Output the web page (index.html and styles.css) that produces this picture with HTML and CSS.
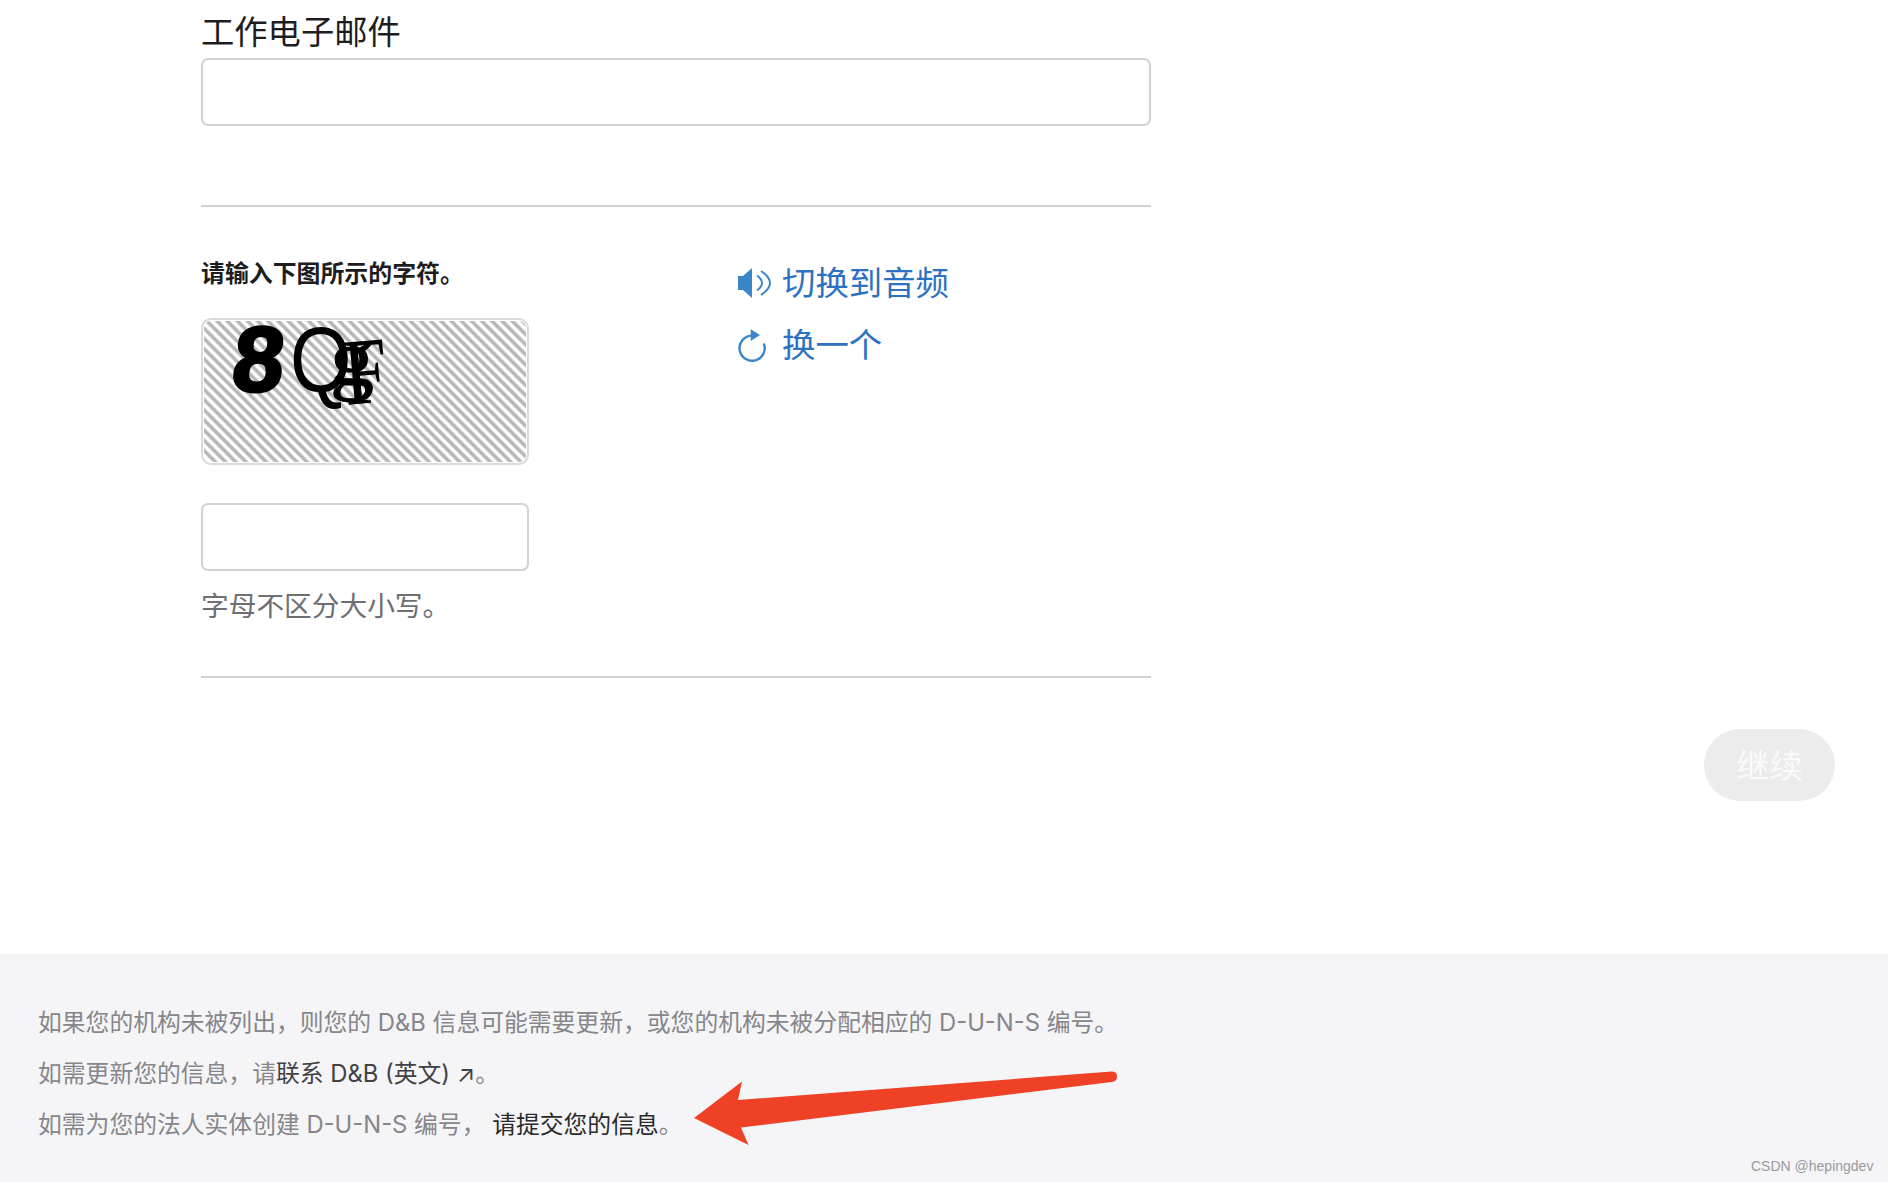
FILE: index.html
```html
<!DOCTYPE html>
<html lang="zh-CN">
<head>
<meta charset="utf-8">
<title>工作电子邮件</title>
<link rel="stylesheet" href="styles.css">
</head>
<body>
<div class="page">
  <main class="main">
    <form class="form">
      <label class="field-label" for="email">工作电子邮件</label>
      <input class="text-input email-input" id="email" type="text">
      <div class="divider first-divider"></div>
      <section class="captcha-section">
        <div class="captcha-col">
          <div class="captcha-title">请输入下图所示的字符。</div>
          <div class="captcha-image">
            <svg class="captcha-svg" viewBox="0 0 320 141" width="320" height="141">
              <text class="cap-8" transform="translate(26 70) skewX(-6)">8</text>
              <text class="cap-q" transform="translate(86 70) scale(0.86 1)">Q</text>
              <text class="cap-g" transform="translate(126 64) scale(1.1 1)">g</text>
              <text class="cap-f" transform="translate(142 84) rotate(-5) scale(0.84 1)">F</text>
            </svg>
          </div>
          <input class="text-input captcha-input" type="text">
          <p class="hint">字母不区分大小写。</p>
        </div>
        <div class="link-col">
          <a class="action-link" href="#">
            <svg class="icon" viewBox="0 0 32 30" width="32" height="30">
              <path class="icon-fill" d="M0 8H5L14 0V30L5 22H0Z"/>
              <path class="icon-line" d="M19 7.500Q29 15 19 22.500"/>
              <path class="icon-line" d="M23 3Q41 15 23 27"/>
            </svg>
            <span>切换到音频</span>
          </a>
          <a class="action-link" href="#">
            <svg class="icon" viewBox="0 0 32 34" width="32" height="34">
              <path class="icon-line thick" d="M13.500 7.600A12.600 12.600 0 1 0 25.800 15.500"/>
              <path class="icon-fill" d="M12.700 1.300L22 7L12.700 13Z"/>
            </svg>
            <span>换一个</span>
          </a>
        </div>
      </section>
      <div class="divider"></div>
    </form>
    <div class="actions">
      <button class="continue" type="button">继续</button>
    </div>
  </main>
  <footer class="footer">
    <p class="foot-line">如果您的机构未被列出，则您的 D&amp;B 信息可能需要更新，或您的机构未被分配相应的 D-U-N-S 编号。</p>
    <p class="foot-line">如需更新您的信息，请<a class="foot-link" href="#">联系 D&amp;B (英文) ↗</a>。</p>
    <p class="foot-line">如需为您的法人实体创建 D-U-N-S 编号， <a class="foot-link strong" href="#">请提交您的信息</a>。</p>
    <svg class="red-arrow" viewBox="0 0 424 76" width="424" height="76">
      <path d="M0 47L48 10.500L44 29L417.500 0.500Q423 0.500 423 5.500Q423 10.500 417.500 11L47 56.500L54.500 74Z"/>
    </svg>
    <span class="watermark">CSDN @hepingdev</span>
  </footer>
</div>
</body>
</html>
```
FILE: styles.css
```css
* { box-sizing: border-box; }
html, body { margin: 0; padding: 0; background: #fff; }
body {
  font-family: Inter, "Noto Sans CJK SC", sans-serif;
  color: #1d1d1f;
}
.page {
  width: 1888px;
  height: 1182px;
  display: flex;
  flex-direction: column;
  overflow: hidden;
}
.main {
  height: 954px;
  flex: none;
  display: flex;
  flex-direction: column;
}
.form {
  width: 950px;
  margin-left: 201px;
}
.field-label {
  display: block;
  padding-top: 8px;
  height: 58px;
  font-size: 33.3px;
  line-height: 48px;
  color: #1d1d1f;
}
.text-input {
  display: block;
  height: 68px;
  border: 2px solid #d2d2d7;
  border-radius: 7px;
  background: #fff;
  outline: none;
  padding: 0 16px;
}
.email-input { width: 950px; height: 68px; }
.captcha-input { width: 328px; }
.divider {
  height: 2px;
  background: #d2d2d7;
}
.first-divider { margin-top: 79px; }
.captcha-section {
  display: grid;
  grid-template-columns: 537px 1fr;
}
.captcha-title {
  margin-top: 48px;
  font-size: 23.9px;
  line-height: 38px;
  font-weight: 700;
  color: #1d1d1f;
}
.captcha-image {
  margin-top: 25px;
  width: 328px;
  height: 147px;
  padding: 1px;
  border: 2px solid #dadadc;
  border-radius: 10px;
  background: repeating-linear-gradient(45deg, #b6b6b6 0, #b6b6b6 1.8px, #fff 3.6px, #fff 5.4px, #b6b6b6 7.2px) content-box;
}
.captcha-svg { display: block; overflow: visible; filter: blur(0.5px); }
.captcha-svg text { fill: #000; font-family: "Liberation Sans", sans-serif; }
.cap-8 { font-size: 92px; font-weight: 700; stroke: #000; stroke-width: 3px; }
.cap-q { font-size: 92px; }
.captcha-svg .cap-g { font-family: "Liberation Serif", serif; font-size: 80px; stroke: #000; stroke-width: 1px; }
.captcha-svg .cap-f { font-family: "Liberation Serif", serif; font-size: 95px; }
.captcha-input { margin-top: 38px; }
.hint {
  margin: 15px 0 50px;
  font-size: 27.7px;
  line-height: 40px;
  color: #6e6e73;
}
.link-col {
  padding-top: 56px;
  display: flex;
  flex-direction: column;
  gap: 22px;
}
.action-link {
  display: flex;
  align-items: center;
  gap: 12px;
  height: 40px;
  color: #2d72c2;
  font-size: 33.4px;
  line-height: 40px;
  text-decoration: none;
}
.icon { display: block; flex: none; overflow: visible; }
.icon-fill { fill: #3a86c8; }
.icon-line { fill: none; stroke: #3a86c8; stroke-width: 2; }
.icon-line.thick { stroke-width: 2.4; }
.actions {
  margin-top: 51px;
  padding-right: 53px;
  display: flex;
  justify-content: flex-end;
}
.continue {
  width: 131px;
  height: 72px;
  border: 0;
  border-radius: 36px;
  background: #ececec;
  color: #fafafa;
  font-family: inherit;
  font-size: 33.4px;
  padding: 0 0 4px;
}
.footer {
  position: relative;
  flex: 1;
  background: #f5f5f7;
  padding: 43px 0 0 38px;
}
.foot-line {
  margin: 0;
  font-size: 23.8px;
  line-height: 51px;
  color: #86868b;
  white-space: nowrap;
}
.foot-link { color: #424245; text-decoration: none; }
.foot-link.strong { color: #2a2a2c; }
.red-arrow {
  position: absolute;
  left: 694px;
  top: 117px;
}
.red-arrow path { fill: #ee4126; }
.watermark {
  position: absolute;
  left: 1751px;
  top: 203px;
  font-family: "Liberation Sans", sans-serif;
  font-size: 14px;
  line-height: 18px;
  color: #9a9a9f;
  white-space: nowrap;
}
```
